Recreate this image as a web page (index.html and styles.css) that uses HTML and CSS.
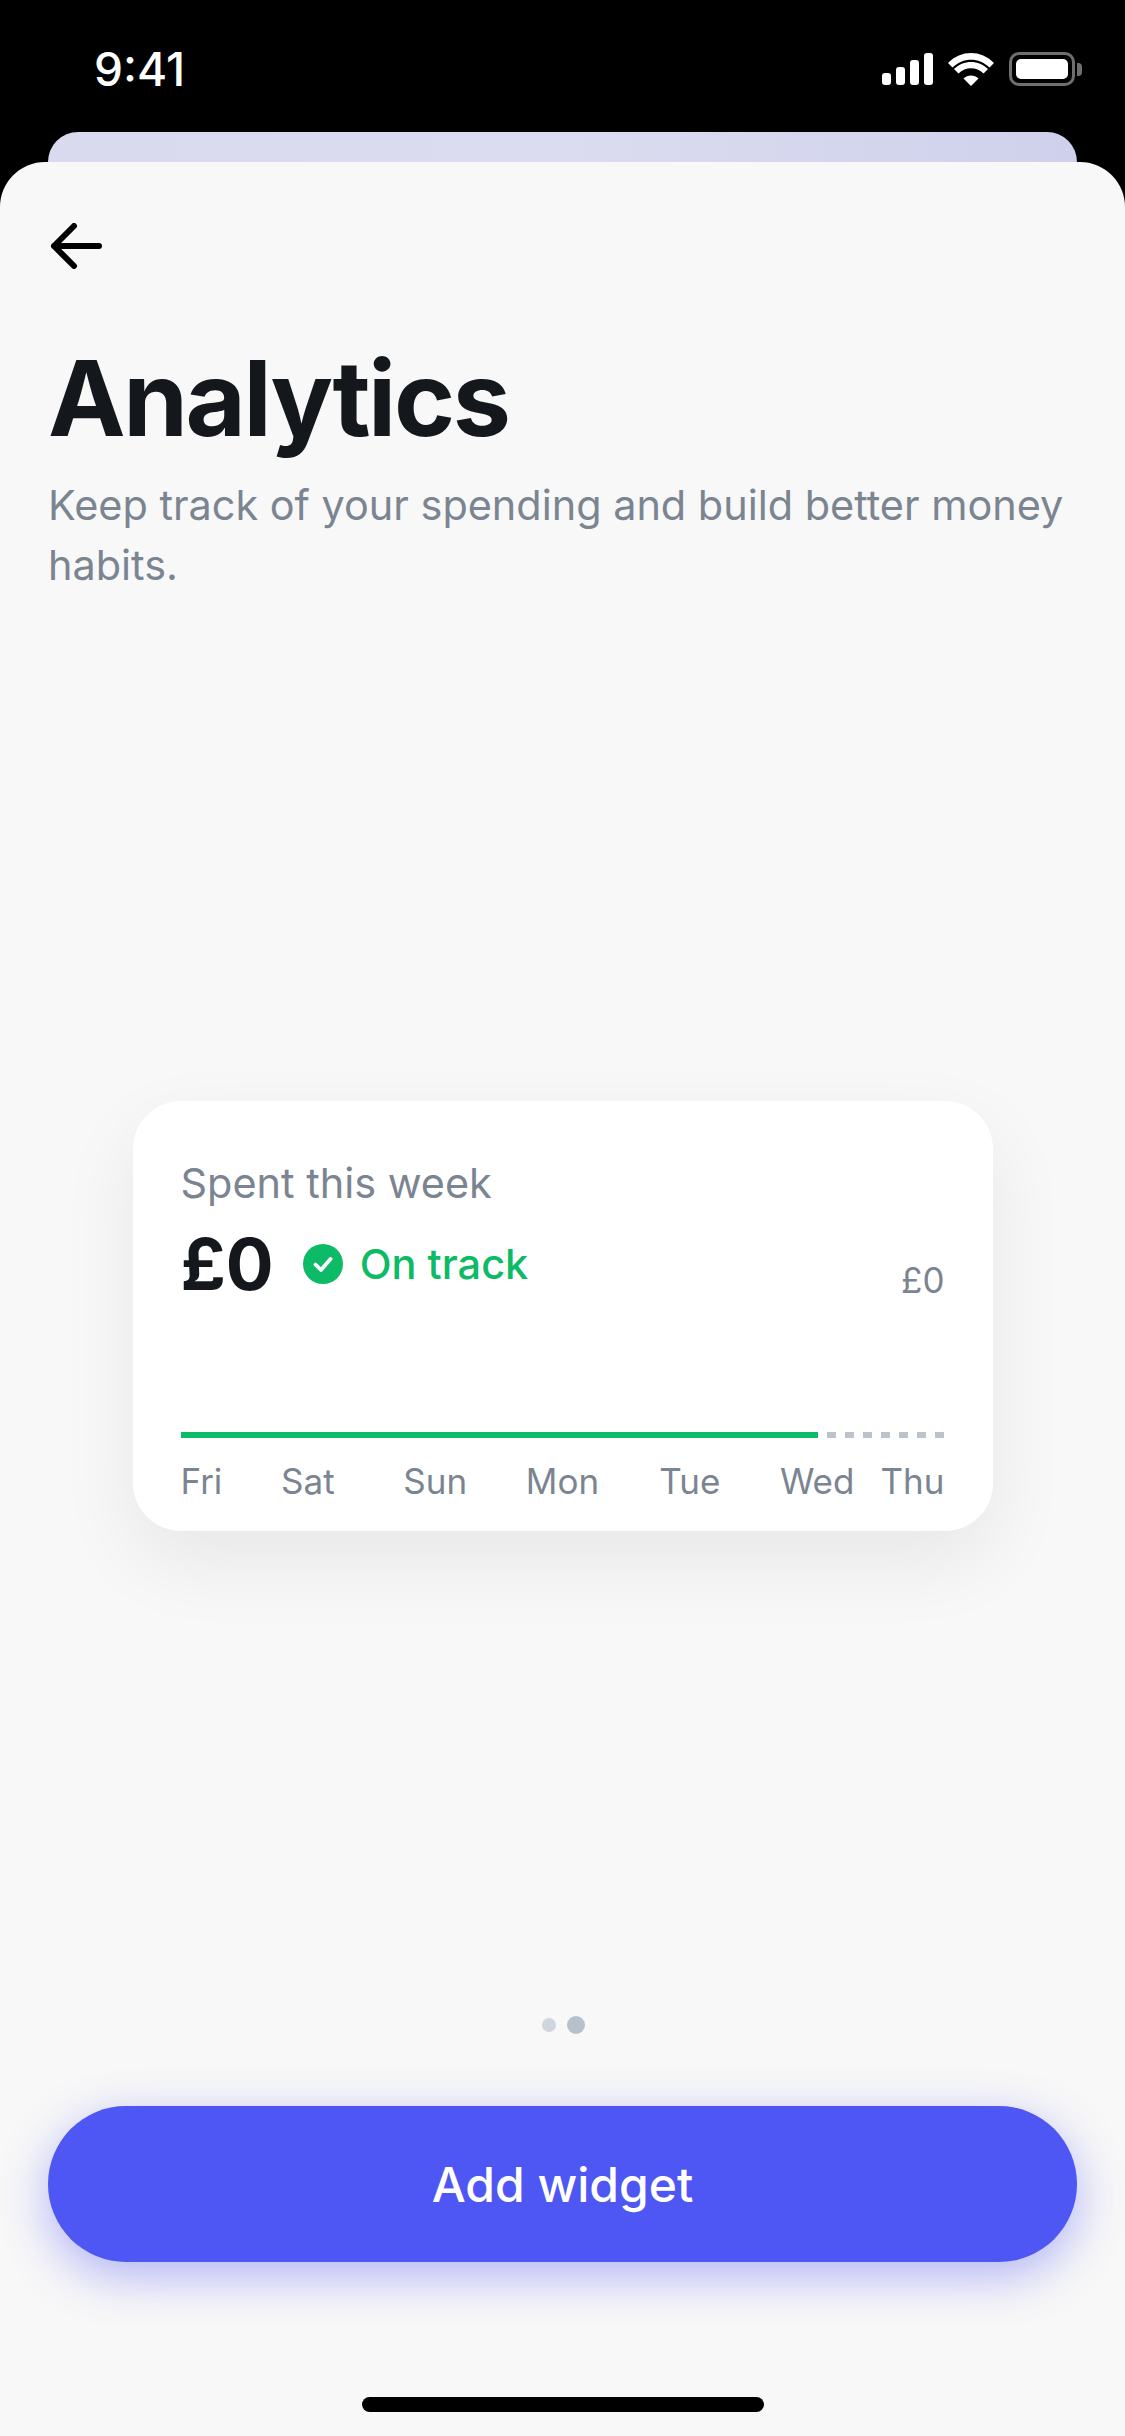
FILE: index.html
```html
<!DOCTYPE html>
<html lang="en">
  <head>
    <meta charset="UTF-8" />
    <meta name="viewport" content="width=device-width, initial-scale=1.0" />
    <title>Analytics</title>
    <link rel="stylesheet" href="styles.css">
  </head>

  <body>
    <!-- Status bar -->
    <div class="status-bar">
      <span class="clock">9:41</span>
      <div class="status-icons">
        <svg class="signal" width="51" height="32" viewBox="0 0 51 32">
          <rect x="0" y="20" width="9" height="12" rx="3" />
          <rect x="14" y="14" width="9" height="18" rx="3" />
          <rect x="28" y="7" width="9" height="25" rx="3" />
          <rect x="42" y="0" width="9" height="32" rx="3" />
        </svg>
        <svg class="wifi" width="46" height="33" viewBox="0 0 46 33">
          <path d="M23 33 L15.5 25.5 C19.5 21.5 26.5 21.5 30.5 25.5 Z" />
          <path d="M10.5 20.5 L6 16 C15.5 6.5 30.5 6.5 40 16 L35.5 20.5 C28.5 13.5 17.5 13.5 10.5 20.5 Z" />
          <path d="M4.5 14.5 L0 10 C13 -3.3 33 -3.3 46 10 L41.5 14.5 C31 4 15 4 4.5 14.5 Z" />
        </svg>
        <div class="battery">
          <div class="battery-body"><div class="battery-fill"></div></div>
          <div class="battery-nub"></div>
        </div>
      </div>
    </div>

    <!-- Card peeking out behind the sheet -->
    <div class="peek"></div>

    <div class="sheet">
      <svg class="back" width="54" height="46" viewBox="0 0 54 46">
        <path d="M26 3 L6 23 L26 43 M6 23 H51" fill="none" stroke="#000" stroke-width="6" stroke-linecap="round" stroke-linejoin="round" />
      </svg>

      <h1>Analytics</h1>
      <p class="intro">Keep track of your spending and build better money habits.</p>

      <div class="stage">
        <div class="widget">
          <div class="widget-label">Spent this week</div>
          <div class="widget-row">
            <span class="amount">£0</span>
            <svg class="check" width="40" height="40" viewBox="0 0 40 40">
              <circle cx="20" cy="20" r="20" fill="#0dbb66" />
              <path d="M12.5 20.5 L18 26 L27.5 15" fill="none" stroke="#fff" stroke-width="3.8" stroke-linecap="round" stroke-linejoin="round" />
            </svg>
            <span class="status">On track</span>
            <span class="limit">£0</span>
          </div>
          <div class="bar">
            <div class="bar-done"></div>
            <div class="bar-left"></div>
          </div>
          <div class="days">
            <span class="day">Fri</span>
            <span class="day">Sat</span>
            <span class="day">Sun</span>
            <span class="day">Mon</span>
            <span class="day">Tue</span>
            <span class="day">Wed</span>
            <span class="day">Thu</span>
          </div>
        </div>
      </div>

      <div class="dots">
        <span class="dot"></span>
        <span class="dot dot-active"></span>
      </div>

      <button class="add-button">Add widget</button>

      <div class="home-bar"></div>
    </div>
  </body>
</html>
```

FILE: styles.css
```css
* {
  box-sizing: border-box;
}

body {
  margin: 0;
  width: 1125px;
  height: 2436px;
  overflow: hidden;
  background-color: #000;
  font-family: Inter, "Liberation Sans", sans-serif;
}

/* Status bar */
.status-bar {
  display: flex;
  justify-content: space-between;
  align-items: center;
  height: 132px;
  padding: 6px 43px 0 94px;
  color: #fff;
}

.clock {
  font-size: 46px;
  font-weight: 500;
}

.status-icons {
  display: flex;
  align-items: center;
  gap: 15px;
  fill: #fff;
}

.battery {
  display: flex;
  align-items: center;
  gap: 2px;
}

.battery-body {
  width: 66px;
  height: 34px;
  padding: 4px;
  border: 3px solid #6f6f6f;
  border-radius: 10px;
}

.battery-fill {
  height: 100%;
  background-color: #fff;
  border-radius: 5px;
}

.battery-nub {
  width: 5px;
  height: 13px;
  background-color: #6f6f6f;
  border-radius: 0 4px 4px 0;
}

.peek {
  height: 30px;
  margin: 0 48px;
  background: linear-gradient(90deg, #d9daee, #dbdcef 50%, #cfd1ec);
  border-radius: 30px 30px 0 0;
}

/* Main sheet */
.sheet {
  display: flex;
  flex-direction: column;
  height: 2274px;
  padding: 61px 48px 24px;
  background-color: #f8f8f8;
  border-radius: 45px 45px 0 0;
}

.back {
  display: block;
  flex: none;
}

h1 {
  margin: 66px 0 0;
  font-size: 104px;
  line-height: 126px;
  font-weight: 700;
  letter-spacing: -2.4px;
  color: #14171c;
}

.intro {
  margin: 14px 0 0;
  font-size: 41.4px;
  line-height: 60px;
  color: #7b8592;
}

.stage {
  flex: 1;
  display: flex;
  justify-content: center;
  padding-top: 506px;
}

/* Spending widget */
.widget {
  width: 860px;
  height: 430px;
  padding: 57px 48px 0;
  background-color: #fff;
  border-radius: 48px;
  box-shadow: 0 30px 80px rgba(0, 0, 0, 0.07);
}

.widget-label {
  font-size: 41.4px;
  line-height: 50px;
  color: #7b8592;
}

.widget-row {
  display: flex;
  align-items: center;
  height: 76px;
  margin-top: 18px;
}

.amount {
  font-size: 71px;
  font-weight: 700;
  color: #14171c;
}

.check {
  margin-left: 29px;
}

.status {
  margin-left: 17px;
  font-size: 41.5px;
  font-weight: 500;
  color: #0dbb66;
}

.limit {
  margin-left: auto;
  margin-top: 32px;
  font-size: 35px;
  color: #7b8592;
}

.bar {
  display: flex;
  gap: 9px;
  height: 6px;
  margin-top: 130px;
}

.bar-done {
  flex: none;
  width: 637px;
  background-color: #0dbb66;
}

.bar-left {
  flex: 1;
  background: repeating-linear-gradient(90deg, #bcc3cd 0, #bcc3cd 9px, transparent 9px, transparent 18px);
}

.days {
  display: flex;
  justify-content: space-between;
  margin-top: 21px;
  font-size: 35px;
  line-height: 44px;
  color: #7b8592;
}

/* zero width so the labels sit on evenly spaced ticks */
.day {
  display: flex;
  justify-content: center;
  width: 0;
  white-space: nowrap;
}

.day:first-child {
  justify-content: flex-start;
}

.day:last-child {
  justify-content: flex-end;
}

.dots {
  display: flex;
  justify-content: center;
  align-items: center;
  gap: 11px;
  margin-bottom: 72px;
  padding-left: 2px;
}

.dot {
  width: 14px;
  height: 14px;
  background-color: #cfd6dd;
  border-radius: 50%;
}

.dot-active {
  width: 18px;
  height: 18px;
  background-color: #b7c1cc;
}

.add-button {
  flex: none;
  height: 156px;
  border: none;
  border-radius: 78px;
  background-color: #4e56f3;
  color: #fff;
  font-family: inherit;
  font-size: 48px;
  font-weight: 500;
  box-shadow: 0 14px 48px rgba(78, 86, 243, 0.42);
}

.home-bar {
  flex: none;
  align-self: center;
  width: 402px;
  height: 15px;
  margin-top: 135px;
  background-color: #000;
  border-radius: 8px;
}
```
